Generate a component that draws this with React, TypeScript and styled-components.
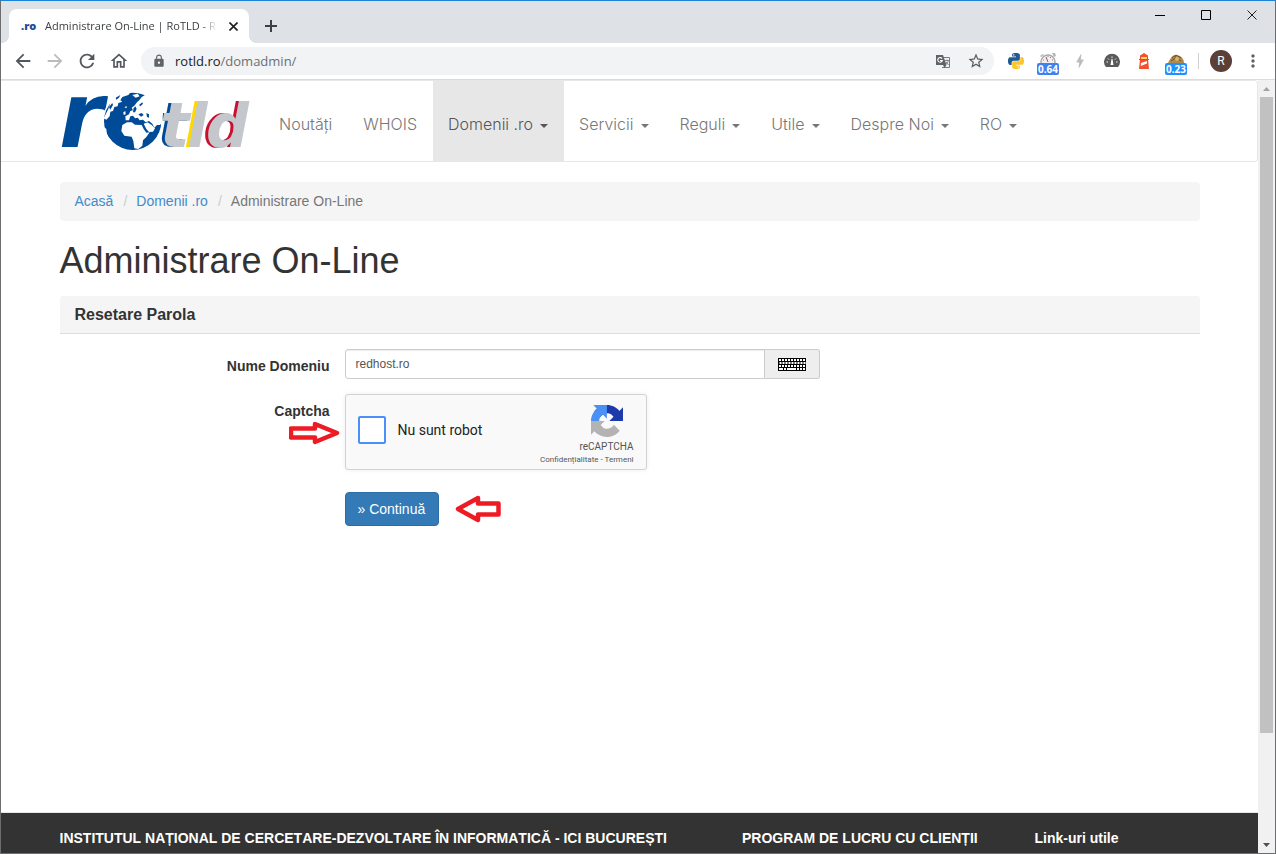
import React from "react";
import styled, { createGlobalStyle, css } from "styled-components";
import {
  MdArrowBack,
  MdArrowForward,
  MdBolt,
  MdLock,
  MdMoreVert,
  MdOutlineHome,
  MdRefresh,
  MdStarBorder,
} from "react-icons/md";

const chromeFont = `"Open Sans", "Noto Sans", sans-serif`;
const pageFont = `"Liberation Sans", Arial, sans-serif`;

const GlobalStyle = createGlobalStyle`
  *, *::before, *::after { box-sizing: border-box; }
  body { margin: 0; background: #fff; font-family: ${pageFont}; font-size: 14px; line-height: 20px; color: #333; }
  button, input { font: inherit; color: inherit; margin: 0; }
  a { color: inherit; text-decoration: none; }
  svg { display: block; flex: none; }
`;

/* ---------- browser window ---------- */

const Window = styled.div`
  display: flex;
  flex-direction: column;
  height: 100vh;
  border: 1px solid #6b6d70;
  border-top-color: #1883d7;
  overflow: hidden;
`;

const TabStrip = styled.div`
  display: flex;
  flex: none;
  height: 42px;
  padding-left: 8px;
  background: #dee1e6;
  font-family: ${chromeFont};
`;

const Tab = styled.div`
  position: relative;
  display: flex;
  align-items: center;
  align-self: flex-end;
  width: 240px;
  height: 34px;
  padding: 0 8px 0 12px;
  gap: 8px;
  background: #fff;
  border-radius: 8px 8px 0 0;
  font-size: 11px;
  color: #3c4043;

  &::before,
  &::after {
    content: "";
    position: absolute;
    bottom: 0;
    width: 8px;
    height: 8px;
  }
  &::before {
    right: 100%;
    background: radial-gradient(circle at 0 0, transparent 8px, #fff 8px);
  }
  &::after {
    left: 100%;
    background: radial-gradient(circle at 100% 0, transparent 8px, #fff 8px);
  }
`;

const Favicon = styled.span`
  width: 16px;
  font-weight: 800;
  color: #1f4b9b;
`;

const TabTitle = styled.span`
  flex: 1;
  overflow: hidden;
  white-space: nowrap;
  mask-image: linear-gradient(to right, #000 calc(100% - 16px), transparent);
`;

const PlainButton = styled.button`
  display: flex;
  align-items: center;
  justify-content: center;
  padding: 0;
  border: 0;
  background: none;
`;

const TabClose = styled(PlainButton)`
  width: 16px;
  height: 16px;
`;

const NewTab = styled(PlainButton)`
  align-self: flex-end;
  width: 28px;
  height: 34px;
  margin-left: 8px;
`;

const WindowButtons = styled.div`
  display: flex;
  margin-left: auto;
`;

const WindowButton = styled(PlainButton)`
  width: 46px;
  height: 28px;
`;

const Toolbar = styled.div`
  display: flex;
  align-items: center;
  flex: none;
  height: 37px;
  padding-left: 6px;
  border-bottom: 1px solid #d9dbde;
  font-family: ${chromeFont};
  color: #5f6368;
`;

const ToolButton = styled(PlainButton)<{ $faded?: boolean }>`
  position: relative;
  width: 32px;
  height: 32px;
  color: ${(p) => (p.$faded ? "#babcbe" : "#54585d")};
`;

const Omnibox = styled.div`
  display: flex;
  align-items: center;
  flex: 1;
  height: 28px;
  margin: 0 6px;
  padding: 0 2px 0 11px;
  gap: 9px;
  border-radius: 14px;
  background: #f1f3f4;
`;

const Address = styled.div`
  flex: 1;
  font-size: 13px;
  color: #6b7075;
  b {
    font-weight: 400;
    color: #202124;
  }
`;

const Badge = styled.span<{ $color: string }>`
  position: absolute;
  left: 5px;
  right: 5px;
  bottom: 2px;
  height: 12px;
  border-radius: 2px;
  background: ${(p) => p.$color};
  color: #fff;
  font-size: 10px;
  font-weight: 700;
  line-height: 12px;
  text-align: center;
`;

const Separator = styled.span`
  width: 1px;
  height: 16px;
  margin: 0 11px 0 6px;
  background: #cfd1d4;
`;

const Avatar = styled(PlainButton)`
  width: 22px;
  height: 22px;
  border-radius: 50%;
  background: #5b4037;
  color: #fff;
  font-family: Roboto, sans-serif;
  font-size: 12px;
`;

const MenuButton = styled(PlainButton)`
  width: 32px;
  height: 32px;
  margin: 0 6px 0 5px;
`;

/* ---------- viewport and scroll bar ---------- */

const Viewport = styled.div`
  display: flex;
  flex: 1;
  min-height: 0;
`;

const Page = styled.div`
  display: flex;
  flex-direction: column;
  flex: 1;
  min-width: 0;
  overflow: hidden;
`;

const ScrollTrack = styled.div`
  display: flex;
  flex-direction: column;
  flex: none;
  align-items: center;
  width: 17px;
  background: #f1f1f1;
`;

const ScrollButton = styled(PlainButton)`
  flex: none;
  width: 17px;
  height: 17px;
`;

const ScrollRun = styled.div`
  flex: 1;
  width: 13px;
`;

const ScrollThumb = styled.div`
  height: 86%;
  background: #c1c1c1;
`;

/* ---------- site ---------- */

const Container = styled.div`
  width: 100%;
  max-width: 1170px;
  margin: 0 auto;
  padding: 0 15px;
`;

const Navbar = styled.header`
  flex: none;
  border: 1px solid #e7e7e7;
  border-left: 0;
  border-radius: 0 4px 4px 0;
`;

const NavInner = styled(Container)`
  display: flex;
`;

const Brand = styled.a`
  display: flex;
  align-items: center;
  flex: none;
  width: 205px;
`;

const LogoLetter = styled.text<{ $edge?: string }>`
  font-family: "DejaVu Sans", sans-serif;
  font-style: italic;
  font-weight: 700;
  fill: #c4c7cb;
  ${(p) => p.$edge && css`filter: drop-shadow(-3px 0 0 ${p.$edge});`}
`;

const LogoSvg = styled.svg`
  overflow: visible;
`;

const NavList = styled.nav`
  display: flex;
`;

const NavLink = styled.a<{ $active?: boolean }>`
  display: flex;
  align-items: center;
  gap: 7px;
  height: 80px;
  padding: 6px 16px 0 15px;
  font-family: Inter, "Liberation Sans", sans-serif;
  font-weight: 300;
  font-size: 16px;
  line-height: 20px;
  white-space: nowrap;
  color: #777;
  ${(p) =>
    p.$active &&
    css`
      background: #e7e7e7;
      color: #555;
    `}
`;

const Caret = styled.span`
  margin-top: 4px;
  border: 4px solid transparent;
  border-top-color: currentColor;
  border-bottom: 0;
`;

const Breadcrumb = styled.nav`
  display: flex;
  margin: 20px 0;
  padding: 9px 15px 10px;
  border-radius: 4px;
  background: #f5f5f5;
  color: #777;
  a {
    color: #428bca;
  }
  a::after {
    content: "/";
    padding: 0 9px 0 10px;
    color: #ccc;
  }
`;

const Title = styled.h1`
  margin: 0 0 15px;
  font-size: 36px;
  font-weight: 400;
  line-height: 40px;
`;

const PanelHeading = styled.h2`
  margin: 0 0 15px;
  padding: 9px 15px 8px;
  border-bottom: 1px solid #ddd;
  border-radius: 3px 3px 0 0;
  background: #f5f5f5;
  font-size: 16px;
  line-height: 20px;
`;

const FormRow = styled.div`
  position: relative;
  display: grid;
  grid-template-columns: 3fr 9fr;
  margin-bottom: 15px;
`;

const RowLabel = styled.label`
  padding: 7px 15px 0 0;
  font-weight: 700;
  text-align: right;
`;

const InputGroup = styled.div`
  display: flex;
  width: calc(500% / 9);
  height: 30px;
`;

const DomainInput = styled.input`
  flex: 1;
  min-width: 0;
  padding: 0 10px;
  border: 1px solid #ccc;
  border-radius: 3px 0 0 3px;
  background: #fff;
  box-shadow: inset 0 1px 1px rgba(0, 0, 0, 0.075);
  font-size: 12px;
  color: #555;
`;

const KeyboardButton = styled(PlainButton)`
  width: 55px;
  border: 1px solid #ccc;
  border-left: 0;
  border-radius: 0 3px 3px 0;
  background: #eee;
`;

const Captcha = styled.div`
  display: flex;
  justify-content: space-between;
  width: 302px;
  height: 76px;
  padding: 0 12px;
  border: 1px solid #d3d3d3;
  border-radius: 3px;
  background: #f9f9f9;
  box-shadow: 0 0 4px rgba(0, 0, 0, 0.08);
  font-family: Roboto, sans-serif;
`;

const CaptchaCheck = styled.label`
  display: flex;
  align-items: center;
  gap: 12px;
  padding-bottom: 4px;
  font-size: 14px;
  color: #222;
  white-space: nowrap;
`;

const CheckBox = styled.input`
  appearance: none;
  width: 28px;
  height: 28px;
  border: 2px solid #4a90fa;
  border-radius: 2px;
  background: #fff;
`;

const CaptchaBrand = styled.div`
  display: flex;
  flex-direction: column;
  align-items: flex-end;
  padding-top: 10px;
  color: #555;
  svg {
    margin-right: 11px;
  }
`;

const CaptchaName = styled.span`
  padding-top: 4px;
  font-size: 10px;
  line-height: 12px;
`;

const CaptchaLinks = styled.span`
  padding-top: 2px;
  font-size: 8px;
  line-height: 10px;
`;

const CaptchaPointer = styled.span`
  position: absolute;
  top: 27px;
  right: 75%;
  padding-right: 5px;
`;

const Actions = styled.div`
  display: flex;
  align-items: center;
  gap: 16px;
  padding-top: 7px;
  padding-left: 25%;
`;

const SubmitButton = styled.button`
  height: 34px;
  padding: 0 13px 0 12px;
  border: 1px solid #2e6da4;
  border-radius: 4px;
  background: #337ab7;
  color: #fff;
`;

const Footer = styled.footer`
  flex: none;
  height: 41px;
  margin-top: auto;
  padding-top: 15px;
  border-top: 1px solid #e7e7e7;
  background: #333;
  color: #fff;
`;

const FooterInner = styled(Container)`
  display: grid;
  grid-template-columns: 7fr 3fr 2fr;
  padding: 0;
`;

const FooterHeading = styled.h3`
  margin: 0;
  padding-left: 15px;
  font-size: 14px;
  font-kerning: none;
  line-height: 20px;
  white-space: nowrap;
`;

/* ---------- drawings ---------- */

const Logo = () => (
  <LogoSvg width="190" height="64" viewBox="0 0 190 64" role="img" aria-label="RoTLD">
    <LogoLetter x="0" y="58" fontSize="90" style={{ fill: "#004b98" }}>r</LogoLetter>
    <LogoLetter x="101" y="58" fontSize="62" $edge="#004b98">t</LogoLetter>
    <LogoLetter x="128" y="58" fontSize="60" $edge="#ffd800">l</LogoLetter>
    <LogoLetter x="147" y="58" fontSize="60" $edge="#c8102e">d</LogoLetter>
    <g transform="translate(40 -4) scale(.3333)">
      <circle cx="101" cy="109" r="90" fill="#fff" />
      <circle cx="101" cy="109" r="86" fill="#004b98" />
      <g fill="#fff">
        <path d="M106 62L114 52L122 44L128 36L142 28L170 50L192 84L190 112L183 120L174 120L166 128L160 116L150 108L140 112L132 104L122 106L116 98L108 100L102 92L94 94L90 106L80 106L79 94L90 88L94 78L102 76L98 68Z" />
        <path d="M70 120L84 112L98 112L108 119L128 120L134 132L142 143L152 142L142 156L132 166L130 182L118 192L106 190L103 168L98 155L76 152L67 138Z" />
        <path d="M134 116L146 112L158 120L168 130L162 140L150 141L142 132Z" />
        <path d="M28 72L36 48L54 30L76 20L96 20L88 30L70 36L64 46L70 50L58 54L56 64L46 66L42 78L34 80L32 94L22 104L14 100Z" />
        <path d="M100 30L116 26L122 34L110 38Z" />
        <path d="M76 66L84 64L82 70ZM73 82L79 78L80 88L74 90Z" />
        <path d="M12 124L22 132L24 150L36 172L26 166L14 146Z" />
        <path d="M176 150L183 140L184 150L178 160Z" />
      </g>
      <g fill="#004b98">
        <path d="M104 70L109 64L113 72L108 82L102 82Z" />
        <path d="M118 88L128 84L134 90L126 95Z" />
        <path d="M142 84L150 88L150 98L144 96Z" />
        <path d="M96 98L102 98L112 108L104 108ZM112 98L120 108L114 110Z" />
        <path d="M120 60L130 52L132 56L124 64Z" />
        <path d="M30 66L40 54L42 60L34 74ZM50 38L64 30L60 38L52 44Z" />
      </g>
    </g>
  </LogoSvg>
);

const pythonHalf =
  "M14.25.18l.9.2.73.26.59.3.45.32.34.34.25.34.16.33.1.3.04.26.02.2-.01.13V8.5l-.05.63-.13.55-.21.46-.26.38-.3.31-.33.25-.35.19-.35.14-.33.1-.3.07-.26.04-.21.02H8.77l-.69.05-.59.14-.5.22-.41.27-.33.32-.27.35-.2.36-.15.37-.1.35-.07.32-.04.27-.02.21v3.06H3.17l-.21-.03-.28-.07-.32-.12-.35-.18-.36-.26-.36-.36-.35-.46-.32-.59-.28-.73-.21-.88-.14-1.05-.05-1.23.06-1.22.16-1.04.24-.87.32-.71.36-.57.4-.44.42-.33.42-.24.4-.16.36-.1.32-.05.24-.01h.16l.06.01h8.16v-.83H6.18l-.01-2.75-.02-.37.05-.34.11-.31.17-.28.25-.26.31-.23.38-.2.44-.18.51-.15.58-.12.64-.1.71-.06.77-.04.84-.02 1.27.05zm-6.3 1.98l-.23.33-.08.41.08.41.23.34.33.22.41.09.41-.09.33-.22.23-.34.08-.41-.08-.41-.23-.33-.33-.22-.41-.09-.41.09z";

const PythonIcon = () => (
  <svg width="16" height="16" viewBox="0 0 24 24">
    <path d={pythonHalf} fill="#1f5a91" />
    <path d={pythonHalf} fill="#fdc52c" transform="rotate(180 12 12)" />
  </svg>
);

const TranslateIcon = () => (
  <svg width="16" height="16" viewBox="0 0 16 16">
    <path d="M8 4.500h6.500v10H7" fill="none" stroke="#777b80" />
    <path d="M1 2h7l3.500 10H1z" fill="#5f6368" />
    <path d="M8 12l1.500 3L11.500 12z" fill="#5f6368" />
    <path d="M7 5.600A2.300 2.300 0 1 0 7.300 7.500H5" fill="none" stroke="#fff" strokeWidth="1.100" />
    <path d="M10 7.500h4M12 6.500v1M13.300 7.500c-.4 2-1.500 3.200-2.500 4M11 9l2.700 3" fill="none" stroke="#777b80" strokeWidth=".9" />
  </svg>
);

const StopwatchIcon = () => (
  <svg width="18" height="18" viewBox="0 0 18 18">
    <path d="M1 4l3-2 1 1-3 2zM13 1h3l1 3-2 1z" fill="#b5b5b5" />
    <circle cx="9" cy="10" r="7" fill="#f1f1f1" stroke="#aaa" strokeWidth="1.500" />
    <path d="M9 10L7 5" stroke="#b24a4a" />
    <path d="M9 4v1M4 8h1M13 8h1M12 5l-1 1" stroke="#888" />
  </svg>
);

const GaugeIcon = () => (
  <svg width="16" height="16" viewBox="0 0 16 16">
    <path d="M2 14a8 8 0 1 1 12 0z" fill="#5a5a5a" />
    <path d="M2.500 9H4M4 5.500l1 1M8 3.500v1.500M12 5.500l-1 1M13.500 9H12" stroke="#fff" />
    <path d="M7.500 6h1L9.500 12h-3z" fill="#fff" />
  </svg>
);

const LighthouseIcon = () => (
  <svg width="12" height="16" viewBox="0 0 12 16">
    <path d="M6 0l4 2.500V4H2V2.500zM2 6h8l1 10H1z" fill="#f4502f" />
    <path d="M3 4h6v2H3z" fill="#ffd84d" />
    <path d="M2 4h1v2H2zM9 4h1v2H9zM1 6h10v1H1z" fill="#e8442a" />
    <path d="M3 10l6-2v2.500L2.800 13z" fill="#fff" />
  </svg>
);

const CoinIcon = () => (
  <svg width="18" height="18" viewBox="0 0 18 18">
    <path d="M1 11c2-3 3-8 8-8s8 4 8 8z" fill="#b08a4c" />
    <path d="M5 6l4-3 5 3M4 9l5-3 5 3M8 4l2 5" stroke="#6f5327" fill="none" />
    <circle cx="10" cy="7" r="2" fill="#d8b674" />
  </svg>
);

const Keyboard = () => {
  const keys: React.ReactElement[] = [];
  for (let row = 0; row < 3; row++) {
    for (let col = 0; col < 9; col++) {
      keys.push(
        <rect key={`${row}-${col}`} x={1 + col * 3 + (row === 1 ? 0.5 : 0)} y={1 + row * 3} width="2" height="2" fill="#fff" />
      );
    }
  }
  return (
    <svg width="28" height="13" viewBox="0 0 28 13">
      <rect width="28" height="13" fill="#000" />
      {keys}
      <path d="M1 10h4v2H1zM6 10h2v2H6zM9 10h9v2H9zM19 10h2v2h-2zM22 10h2v2h-2zM25 10h2v2h-2z" fill="#fff" />
    </svg>
  );
};

const RecaptchaMark = () => (
  <svg width="32" height="32" viewBox="0 0 64 64">
    <path fill="#1c3aa9" d="M64 31.955l-.033-1.370V4.687l-7.160 7.160C50.948 4.674 42.033.093 32.050.093c-10.400 0-19.622 4.960-25.458 12.640l11.736 11.860a15.550 15.550 0 0 1 4.754-5.334c2.050-1.600 4.952-2.906 8.968-2.906.485 0 .860.057 1.135.163 4.976.393 9.288 3.140 11.828 7.124l-8.307 8.307L64 31.953" />
    <path fill="#4a90f5" d="M31.862.094l-1.370.033H4.594l7.160 7.160C4.580 13.147 0 22.060 0 32.046c0 10.400 4.960 19.622 12.640 25.458L24.500 45.768a15.550 15.550 0 0 1-5.334-4.754c-1.600-2.050-2.906-4.952-2.906-8.968 0-.485.057-.860.163-1.135.393-4.976 3.140-9.288 7.124-11.828l8.307 8.307L31.860.095" />
    <path fill="#b3b3b3" d="M.001 32.045l.033 1.370v25.898l7.160-7.160c5.860 7.173 14.774 11.754 24.760 11.754 10.400 0 19.622-4.960 25.458-12.640l-11.736-11.860a15.550 15.550 0 0 1-4.754 5.334c-2.050 1.600-4.952 2.906-8.968 2.906-.485 0-.860-.057-1.135-.163-4.976-.393-9.288-3.140-11.828-7.124l8.307-8.307c-10.522.040-22.400.066-27.295-.005" />
  </svg>
);

const ArrowRight = () => (
  <svg width="51" height="24" viewBox="0 0 51 24">
    <path d="M2 7.500H26V3L48 12L26 21V16.500H2Z" fill="none" stroke="#ed1c24" strokeWidth="4.500" strokeLinejoin="round" />
  </svg>
);

const ArrowLeft = () => (
  <svg width="46" height="28" viewBox="0 0 46 28">
    <path d="M43.500 8.500H23V3L3 14L23 25V19.500H43.500Z" fill="none" stroke="#ed1c24" strokeWidth="4.500" strokeLinejoin="round" />
  </svg>
);

const Cross = ({ size, width }: { size: number; width: number }) => (
  <svg width={size} height={size} viewBox="0 0 10 10">
    <path d="M.5.5l9 9M9.500.5l-9 9" stroke="#202124" strokeWidth={width} />
  </svg>
);

const navItems = [
  { text: "Noutăți" },
  { text: "WHOIS" },
  { text: "Domenii .ro", menu: true, active: true },
  { text: "Servicii", menu: true },
  { text: "Reguli", menu: true },
  { text: "Utile", menu: true },
  { text: "Despre Noi", menu: true },
  { text: "RO", menu: true },
];

export default function App() {
  return (
    <>
      <GlobalStyle />
      <Window>
        <TabStrip>
          <Tab>
            <Favicon>.ro</Favicon>
            <TabTitle>Administrare On-Line | RoTLD - R</TabTitle>
            <TabClose aria-label="Close tab">
              <Cross size={9} width={1.8} />
            </TabClose>
          </Tab>
          <NewTab aria-label="New tab">
            <svg width="12" height="12" viewBox="0 0 12 12">
              <path d="M6 0v12M0 6h12" stroke="#3c4043" strokeWidth="2" />
            </svg>
          </NewTab>
          <WindowButtons>
            <WindowButton aria-label="Minimize">
              <svg width="10" height="10" viewBox="0 0 10 10">
                <path d="M0 5.500h10" stroke="#000" />
              </svg>
            </WindowButton>
            <WindowButton aria-label="Maximize">
              <svg width="10" height="10" viewBox="0 0 10 10">
                <path d="M.5.5h9v9h-9z" fill="none" stroke="#000" />
              </svg>
            </WindowButton>
            <WindowButton aria-label="Close">
              <Cross size={10} width={1} />
            </WindowButton>
          </WindowButtons>
        </TabStrip>

        <Toolbar>
          <ToolButton aria-label="Back"><MdArrowBack size={22} /></ToolButton>
          <ToolButton aria-label="Forward" $faded><MdArrowForward size={22} /></ToolButton>
          <ToolButton aria-label="Reload"><MdRefresh size={22} /></ToolButton>
          <ToolButton aria-label="Home"><MdOutlineHome size={20} /></ToolButton>
          <Omnibox>
            <MdLock size={14} />
            <Address><b>rotld.ro</b>/domadmin/</Address>
            <PlainButton aria-label="Translate"><TranslateIcon /></PlainButton>
            <ToolButton aria-label="Bookmark"><MdStarBorder size={18} /></ToolButton>
          </Omnibox>
          <ToolButton aria-label="Python"><PythonIcon /></ToolButton>
          <ToolButton aria-label="Page load time">
            <StopwatchIcon />
            <Badge $color="#4080f0">0.64</Badge>
          </ToolButton>
          <ToolButton aria-label="Bolt" $faded><MdBolt size={18} /></ToolButton>
          <ToolButton aria-label="Gauge"><GaugeIcon /></ToolButton>
          <ToolButton aria-label="Lighthouse"><LighthouseIcon /></ToolButton>
          <ToolButton aria-label="Timer">
            <CoinIcon />
            <Badge $color="#1e90ff">0.23</Badge>
          </ToolButton>
          <Separator />
          <Avatar aria-label="Profile">R</Avatar>
          <MenuButton aria-label="Menu"><MdMoreVert size={20} /></MenuButton>
        </Toolbar>

        <Viewport>
          <Page>
            <Navbar>
              <NavInner>
                <Brand href="#"><Logo /></Brand>
                <NavList>
                  {navItems.map((item) => (
                    <NavLink key={item.text} href="#" $active={item.active}>
                      {item.text}
                      {item.menu && <Caret />}
                    </NavLink>
                  ))}
                </NavList>
              </NavInner>
            </Navbar>

            <Container as="main">
              <Breadcrumb>
                <a href="#">Acasă</a>
                <a href="#">Domenii .ro</a>
                <span>Administrare On-Line</span>
              </Breadcrumb>
              <Title>Administrare On-Line</Title>
              <form>
                <PanelHeading>Resetare Parola</PanelHeading>
                <FormRow>
                  <RowLabel htmlFor="domain">Nume Domeniu</RowLabel>
                  <InputGroup>
                    <DomainInput id="domain" type="text" defaultValue="redhost.ro" />
                    <KeyboardButton type="button" aria-label="Keyboard"><Keyboard /></KeyboardButton>
                  </InputGroup>
                </FormRow>
                <FormRow>
                  <RowLabel htmlFor="captcha">Captcha</RowLabel>
                  <Captcha>
                    <CaptchaCheck>
                      <CheckBox id="captcha" type="checkbox" />
                      Nu sunt robot
                    </CaptchaCheck>
                    <CaptchaBrand>
                      <RecaptchaMark />
                      <CaptchaName>reCAPTCHA</CaptchaName>
                      <CaptchaLinks>
                        <a href="#">Confidențialitate</a> - <a href="#">Termeni</a>
                      </CaptchaLinks>
                    </CaptchaBrand>
                  </Captcha>
                  <CaptchaPointer><ArrowRight /></CaptchaPointer>
                </FormRow>
                <Actions>
                  <SubmitButton type="button">» Continuă</SubmitButton>
                  <ArrowLeft />
                </Actions>
              </form>
            </Container>

            <Footer>
              <FooterInner>
                <FooterHeading>INSTITUTUL NAȚIONAL DE CERCETARE-DEZVOLTARE ÎN INFORMATICĂ - ICI BUCUREȘTI</FooterHeading>
                <FooterHeading>PROGRAM DE LUCRU CU CLIENȚII</FooterHeading>
                <FooterHeading>Link-uri utile</FooterHeading>
              </FooterInner>
            </Footer>
          </Page>

          <ScrollTrack>
            <ScrollButton aria-label="Scroll up">
              <svg width="7" height="4" viewBox="0 0 7 4"><path d="M0 4L3.500 0L7 4z" fill="#a3a3a3" /></svg>
            </ScrollButton>
            <ScrollRun><ScrollThumb /></ScrollRun>
            <ScrollButton aria-label="Scroll down">
              <svg width="7" height="4" viewBox="0 0 7 4"><path d="M0 0L3.500 4L7 0z" fill="#505050" /></svg>
            </ScrollButton>
          </ScrollTrack>
        </Viewport>
      </Window>
    </>
  );
}
